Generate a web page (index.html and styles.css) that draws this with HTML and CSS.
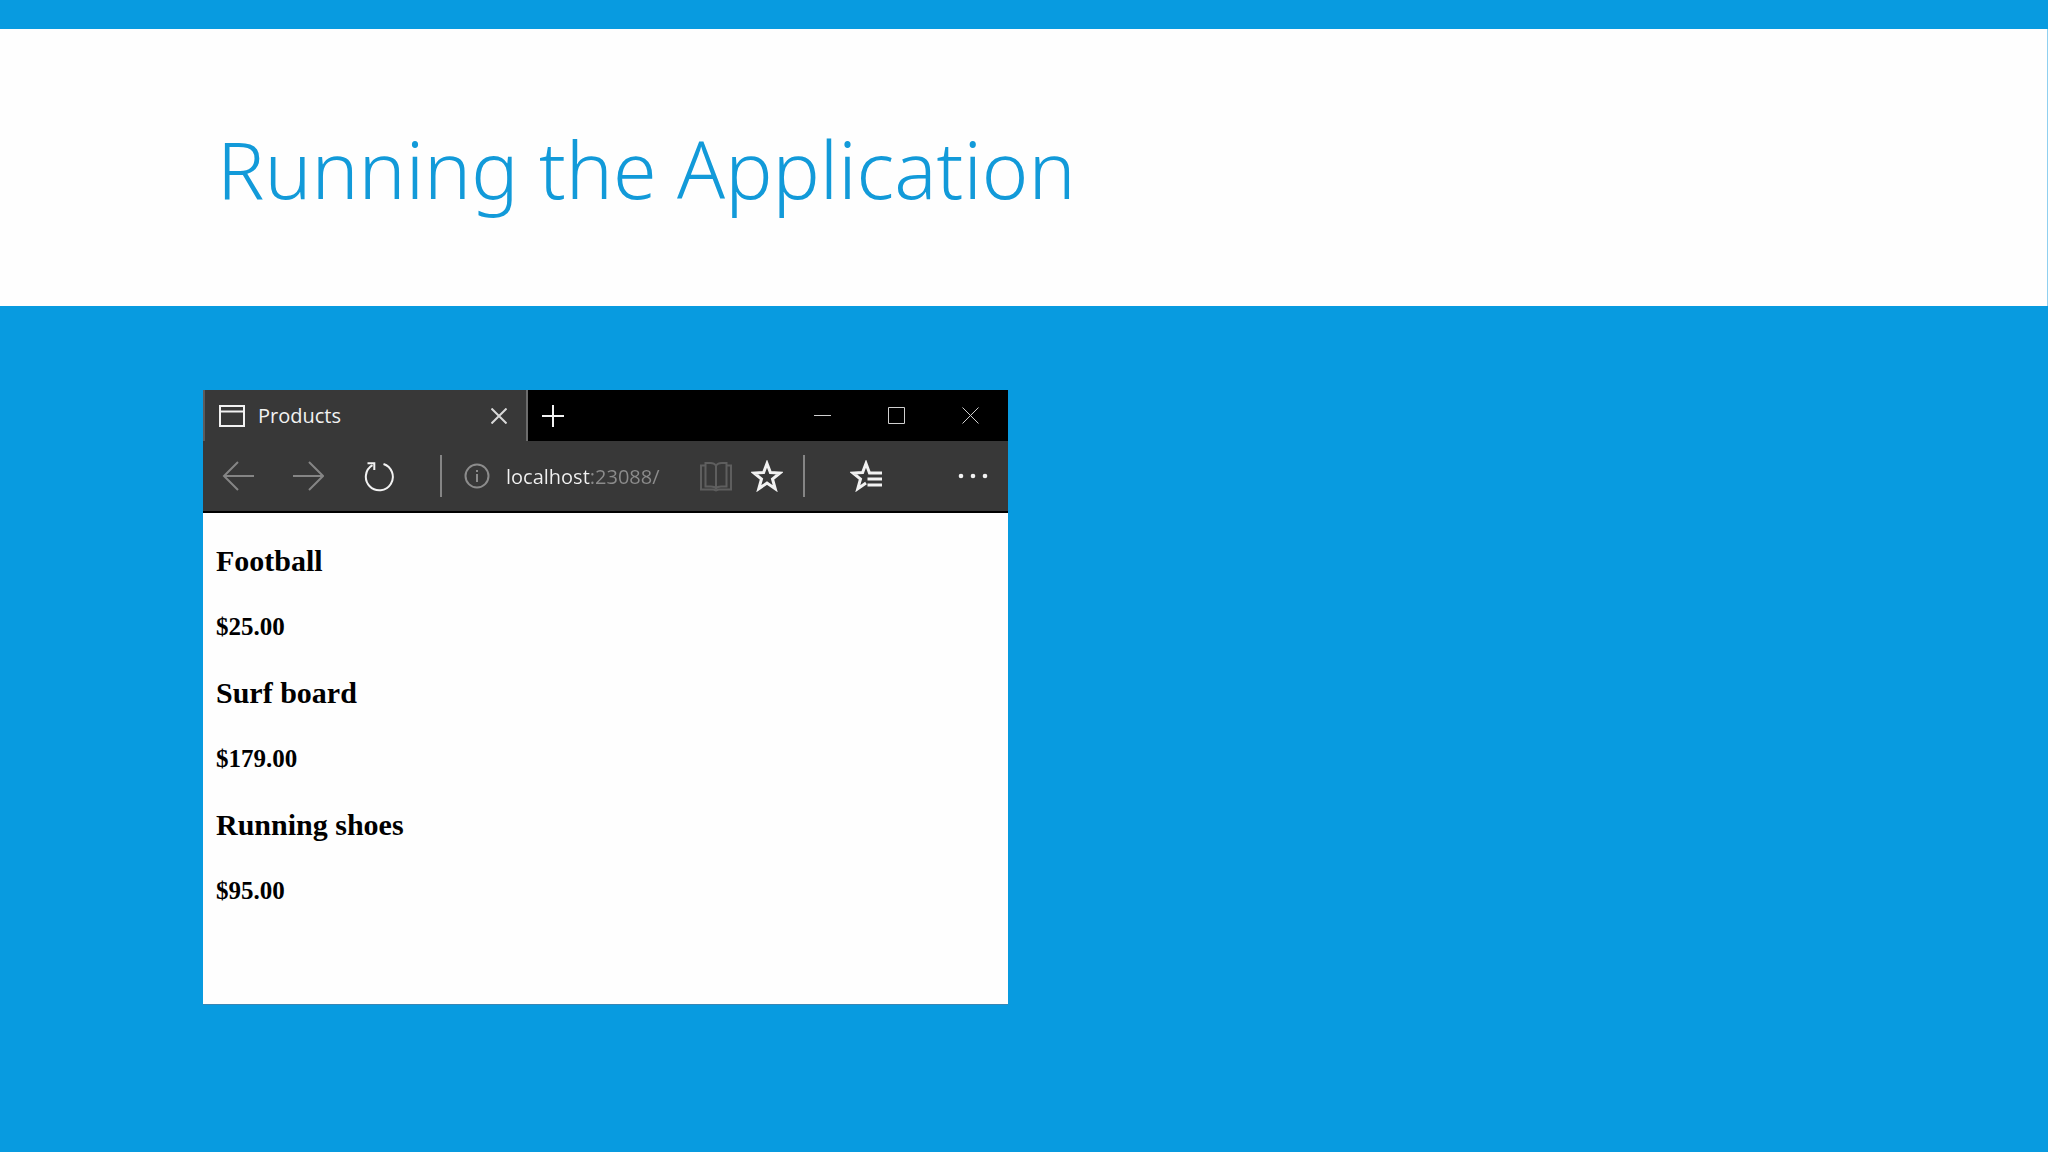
FILE: index.html
```html
<!DOCTYPE html>
<html lang="en">
<head>
    <meta charset="UTF-8">
    <meta name="viewport" content="width=device-width, initial-scale=1.0">
    <title>Running the Application</title>
    <link rel="stylesheet" href="styles.css">
</head>
<body>
    <header class="slide-header">
        <h1>Running the Application</h1>
    </header>

    <main class="slide-body">
        <section class="browser">
            <div class="tab-bar">
                <div class="tab">
                    <svg width="26" height="22" viewBox="0 0 26 22">
                        <path d="M1 1H25V21H1ZM1 6.500H25" />
                    </svg>
                    <span class="tab-title">Products</span>
                    <button class="tab-close" aria-label="Close tab">
                        <svg width="16" height="16" viewBox="0 0 16 16">
                            <path d="M0.500 0.500L15.500 15.500M15.500 0.500L0.500 15.500" />
                        </svg>
                    </button>
                </div>
                <button class="new-tab" aria-label="New tab">
                    <svg width="22" height="22" viewBox="0 0 22 22">
                        <path d="M11 0V22M0 11H22" />
                    </svg>
                </button>
                <div class="window-buttons">
                    <button aria-label="Minimize">
                        <svg width="17" height="17" viewBox="0 0 17 17">
                            <path d="M0 8.500H17" />
                        </svg>
                    </button>
                    <button aria-label="Maximize">
                        <svg width="17" height="17" viewBox="0 0 17 17">
                            <path d="M0.500 0.500H16.500V16.500H0.500Z" />
                        </svg>
                    </button>
                    <button aria-label="Close">
                        <svg width="17" height="17" viewBox="0 0 17 17">
                            <path d="M0.500 0.500L16.500 16.500M16.500 0.500L0.500 16.500" />
                        </svg>
                    </button>
                </div>
            </div>

            <div class="toolbar">
                <button class="nav-button dim" aria-label="Back">
                    <svg width="32" height="32" viewBox="0 0 32 32">
                        <path d="M32 16H2M16 2L2 16L16 30" />
                    </svg>
                </button>
                <button class="nav-button dim" aria-label="Forward">
                    <svg width="32" height="32" viewBox="0 0 32 32">
                        <path d="M1 16H31M17 2L31 16L17 30" />
                    </svg>
                </button>
                <button class="nav-button reload" aria-label="Refresh">
                    <svg width="32" height="32" viewBox="0 0 32 32">
                        <path d="M20.500 4A13.500 13.500 0 1 1 9.500 5.200" />
                        <path d="M4.500 3.200H11.300V10" />
                    </svg>
                </button>
                <span class="divider"></span>
                <div class="address">
                    <svg class="info" width="26" height="26" viewBox="0 0 26 26">
                        <circle cx="13" cy="13" r="11.500" />
                        <path d="M13 11V19M13 7V9" />
                    </svg>
                    <input type="text" value="localhost:23088/" aria-label="Address" spellcheck="false">
                    <button class="book" aria-label="Reading view">
                        <svg width="32" height="32" viewBox="0 0 32 32">
                            <path d="M5.500 5.500H1V29.500H13.500L16 30.500L18.500 29.500H31V5.500H26.500" />
                            <path d="M16 5.500C14.500 3.500 13 3 10.500 3H5.500V26.500H11C13.500 26.500 15 27 16 28.500C17 27 18.500 26.500 21 26.500H26.500V3H21.500C19 3 17.500 3.500 16 5.500ZM16 5.500V28.500" />
                        </svg>
                    </button>
                    <button class="star" aria-label="Add to favorites">
                        <svg width="32" height="32" viewBox="0 0 32 32">
                            <path d="M16 3.500L19.400 12.500L29 13L21.500 19L24.200 28.700L16 23L7.800 28.700L10.500 19L3 13L12.600 12.500Z" />
                        </svg>
                    </button>
                </div>
                <span class="divider"></span>
                <button class="hub" aria-label="Favorites, reading list and history">
                    <svg width="32" height="32" viewBox="0 0 32 32">
                        <path d="M32 13H19.500L16 3.500L12.600 12.500L3 13L10.500 19L7.800 28.700L16 23" />
                        <path d="M17.500 19H32M17.500 25H32" />
                    </svg>
                </button>
                <button class="more" aria-label="More">
                    <svg width="30" height="6" viewBox="0 0 30 6">
                        <circle cx="3" cy="3" r="2.300" />
                        <circle cx="15" cy="3" r="2.300" />
                        <circle cx="27" cy="3" r="2.300" />
                    </svg>
                </button>
            </div>

            <div class="page">
                <h3>Football</h3>
                <h4>$25.00</h4>
                <h3>Surf board</h3>
                <h4>$179.00</h4>
                <h3>Running shoes</h3>
                <h4>$95.00</h4>
            </div>
        </section>
    </main>
</body>
</html>
```
FILE: styles.css
```css
* {
    box-sizing: border-box;
}

body {
    margin: 0;
    min-height: 100vh;
    background: #089be0;
    border-top: 29px solid #089be0;
    font-family: "Open Sans", "Noto Sans", sans-serif;
}

.slide-header {
    background: #fefefe;
    height: 277px;
    padding: 84px 217px 0;
    border-right: 1px solid #8fd0f0;
}

.slide-header h1 {
    margin: 0;
    color: #129ad9;
    font-family: "Noto Sans", "Open Sans", sans-serif;
    font-size: 79px;
    font-weight: 300;
    line-height: 112px;
}

.slide-body {
    padding: 84px 203px;
}

.browser {
    max-width: 805px;
    background: #383838;
}

button {
    display: flex;
    align-items: center;
    justify-content: center;
    margin: 0;
    padding: 0;
    border: none;
    background: none;
    color: #f2f2f2;
    cursor: pointer;
}

svg {
    flex: none;
    fill: none;
    stroke: currentColor;
    stroke-width: 2;
}

.tab-bar {
    display: flex;
    height: 51px;
    background: #000;
}

.tab {
    display: flex;
    align-items: center;
    width: 325px;
    padding-left: 14px;
    background: #383838;
    border-left: 2px solid #5c5c5c;
    border-right: 2px solid #6c6c6c;
    color: #f2f2f2;
}

.tab-title {
    flex: 1;
    margin-left: 13px;
    font-size: 20px;
    line-height: 28px;
}

.tab-close {
    width: 54px;
    height: 51px;
    color: #d8d8d8;
}

.new-tab {
    width: 50px;
}

.window-buttons {
    display: flex;
    margin-left: auto;
    padding-right: 1px;
}

.window-buttons button {
    width: 74px;
    color: #d0d0d0;
}

.window-buttons svg {
    stroke-width: 1;
}

.toolbar {
    display: flex;
    align-items: center;
    height: 72px;
    border-bottom: 2px solid #000;
}

.toolbar button {
    height: 70px;
}

.nav-button {
    width: 70px;
}

.toolbar .dim {
    color: #858585;
}

.toolbar .reload {
    width: 72px;
    margin-right: 25px;
}

.divider {
    width: 2px;
    height: 42px;
    background: #858585;
}

.address {
    display: flex;
    flex: 1;
    align-items: center;
    min-width: 0;
    padding-left: 22px;
    padding-right: 11px;
}

.info {
    color: #8c8c8c;
}

.address input {
    flex: 1;
    min-width: 0;
    height: 28px;
    margin-left: 16px;
    padding: 0;
    border: none;
    outline: none;
    color: #f2f2f2;
    font-family: inherit;
    font-size: 20px;
    /* host is bright, port is dimmed */
    background: linear-gradient(to right, #f2f2f2 84px, #8c8c8c 84px);
    -webkit-background-clip: text;
    background-clip: text;
    -webkit-text-fill-color: transparent;
}

.book,
.star {
    width: 51px;
}

.toolbar .book {
    color: #5e5e5e;
}

.star svg,
.hub svg {
    stroke-width: 3;
}

.hub {
    width: 70px;
    margin-left: 26px;
}

.more {
    width: 70px;
    margin-left: 37px;
}

.more svg {
    fill: currentColor;
    stroke: none;
}

.page {
    min-height: 492px;
    padding: 31px 13px;
    background: #fefefe;
    border-bottom: 1px solid #3a86b4;
    color: #000;
    font-family: "Liberation Serif", serif;
}

.page h3 {
    margin: 0 0 35px;
    font-size: 30px;
    line-height: 34px;
}

.page h4 {
    margin: 0 0 35px;
    font-size: 25px;
    line-height: 28px;
}
```
